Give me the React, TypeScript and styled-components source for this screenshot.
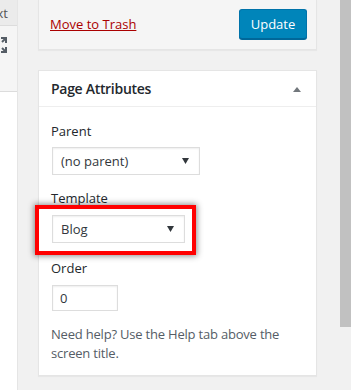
import React from "react";
import styled, { createGlobalStyle } from "styled-components";

const GlobalStyle = createGlobalStyle`
  html, body {
    margin: 0;
    padding: 0;
    background: #f1f1f1;
    font-family: "Open Sans", "Noto Sans", sans-serif;
    color: #23282d;
  }
`;

function Arrow() {
  return (
    <svg width="7" height="6" viewBox="0 0 7 6">
      <path d="M0 0 L7 0 L3.5 6 Z" fill="#32373c" />
    </svg>
  );
}

function SelectBox({ value, width }: { value: string; width: number }) {
  return (
    <StyledSelect $width={width}>
      <span>{value}</span>
      <Arrow />
    </StyledSelect>
  );
}

function App() {
  return (
    <>
      <GlobalStyle />
      <Page>
        <EditorEdge>
          <EditorTabs>
            <TabText>xt</TabText>
          </EditorTabs>
          <EditorToolbar>
            <svg width="18" height="18" viewBox="0 0 18 18" style={{ marginLeft: -10 }}>
              <g fill="none" stroke="#555d66" strokeWidth="2">
                <path d="M2 7 V2 H7" />
                <path d="M11 2 H16 V7" />
                <path d="M2 11 V16 H7" />
                <path d="M11 16 H16 V11" />
                <path d="M16 2 L12 6" />
                <path d="M16 16 L12 12" />
              </g>
            </svg>
          </EditorToolbar>
          <EditorBody />
        </EditorEdge>

        <Sidebar>
          <PublishBox>
            <TrashLink href="#">Move to Trash</TrashLink>
            <UpdateButton>Update</UpdateButton>
          </PublishBox>

          <MetaBox>
            <MetaHeader>
              <MetaTitle>Page Attributes</MetaTitle>
              <Toggle />
            </MetaHeader>
            <MetaInside>
              <FieldLabel>Parent</FieldLabel>
              <SelectBox value="(no parent)" width={148} />

              <FieldLabel $top={14}>Template</FieldLabel>
              <Highlight>
                <SelectBox value="Blog" width={133} />
              </Highlight>

              <FieldLabel $top={4} $bottom={7}>Order</FieldLabel>
              <OrderInput>0</OrderInput>

              <HelpText>Need help? Use the Help tab above the screen title.</HelpText>
            </MetaInside>
          </MetaBox>
        </Sidebar>

        <Scrollbar />
      </Page>
    </>
  );
}

export default App;

const Page = styled.div`
  display: flex;
  align-items: flex-start;
  width: 351px;
  height: 390px;
  overflow: hidden;
`;

const EditorEdge = styled.div`
  width: 17px;
  height: 390px;
  display: flex;
  flex-direction: column;
  border-right: 1px solid #e5e5e5;
  flex-shrink: 0;
  overflow: hidden;
`;

const EditorTabs = styled.div`
  height: 25px;
  background: #ebebeb;
  border-bottom: 1px solid #dcdcdc;
  display: flex;
  align-items: center;
  justify-content: flex-end;
  padding-right: 9px;
`;

const TabText = styled.span`
  font-size: 13px;
  color: #555;
`;

const EditorToolbar = styled.div`
  height: 66px;
  background: #f5f5f5;
  border-bottom: 1px solid #dcdcdc;
  display: flex;
  padding-top: 10px;
  box-sizing: border-box;
`;

const EditorBody = styled.div`
  flex: 1;
  background: #fff;
`;

const Sidebar = styled.div`
  width: 279px;
  margin-left: 20px;
  display: flex;
  flex-direction: column;
  gap: 20px;
  flex-shrink: 0;
`;

const PublishBox = styled.div`
  height: 50px;
  box-sizing: border-box;
  background: #f5f5f5;
  border: 1px solid #e5e5e5;
  border-top: none;
  box-shadow: 0 1px 1px rgba(0, 0, 0, 0.04);
  display: flex;
  align-items: center;
  justify-content: space-between;
  padding: 0 9px 0 11px;
`;

const TrashLink = styled.a`
  color: #a00;
  font-size: 13px;
  text-decoration: underline;
  margin-top: -2px;
`;

const UpdateButton = styled.button`
  width: 68px;
  height: 30px;
  background: #0085ba;
  border: 1px solid #0073aa;
  border-bottom-color: #006799;
  border-radius: 3px;
  box-shadow: 0 1px 0 #006799;
  color: #fff;
  font-family: inherit;
  font-size: 13px;
  padding: 0;
  margin-top: -1px;
`;

const MetaBox = styled.div`
  height: 306px;
  box-sizing: border-box;
  background: #fff;
  border: 1px solid #e5e5e5;
  box-shadow: 0 1px 1px rgba(0, 0, 0, 0.04);
`;

const MetaHeader = styled.div`
  height: 36px;
  box-sizing: border-box;
  border-bottom: 1px solid #eee;
  display: flex;
  align-items: center;
  justify-content: space-between;
  padding: 0 15px 0 12px;
`;

const MetaTitle = styled.h2`
  margin: 0;
  font-size: 14px;
  font-weight: 600;
  color: #23282d;
  letter-spacing: -0.3px;
`;

const Toggle = styled.span`
  width: 0;
  height: 0;
  border-left: 4px solid transparent;
  border-right: 4px solid transparent;
  border-bottom: 5px solid #72777c;
  margin-top: 1px;
`;

const MetaInside = styled.div`
  padding: 15px 12px 0 12px;
  display: flex;
  flex-direction: column;
  align-items: flex-start;
`;

const FieldLabel = styled.p<{ $top?: number; $bottom?: number }>`
  margin: ${(p) => p.$top ?? 0}px 0 ${(p) => p.$bottom ?? 6}px 0;
  font-size: 13px;
  line-height: 19px;
  color: #23282d;
`;

const StyledSelect = styled.div<{ $width: number }>`
  width: ${(p) => p.$width}px;
  height: 28px;
  box-sizing: border-box;
  border: 1px solid #ddd;
  box-shadow: inset 0 1px 2px rgba(0, 0, 0, 0.07);
  background: #fff;
  display: flex;
  align-items: center;
  justify-content: space-between;
  padding: 0 10px 0 8px;
  font-size: 13px;
  color: #32373c;
  margin-left: 1px;
`;

const Highlight = styled.div`
  margin-left: -16px;
  margin-top: -9px;
  width: 161px;
  height: 50px;
  box-sizing: border-box;
  border: 4px solid #f00;
  padding: 6px 0 0 12px;
  box-shadow: 0 0 6px 1px rgba(0, 0, 0, 0.45);
`;

const OrderInput = styled.div`
  width: 66px;
  height: 26px;
  box-sizing: border-box;
  border: 1px solid #ddd;
  box-shadow: inset 0 1px 2px rgba(0, 0, 0, 0.07);
  font-size: 13px;
  color: #32373c;
  display: flex;
  align-items: center;
  padding-left: 7px;
  margin-left: 1px;
`;

const HelpText = styled.p`
  margin: 14px 0 0 0;
  font-size: 13px;
  line-height: 19px;
  letter-spacing: -0.2px;
  color: #555d66;
  width: 235px;
`;

const Scrollbar = styled.div`
  margin-left: auto;
  width: 11px;
  height: 327px;
  background: #c1c1c1;
  flex-shrink: 0;
`;
